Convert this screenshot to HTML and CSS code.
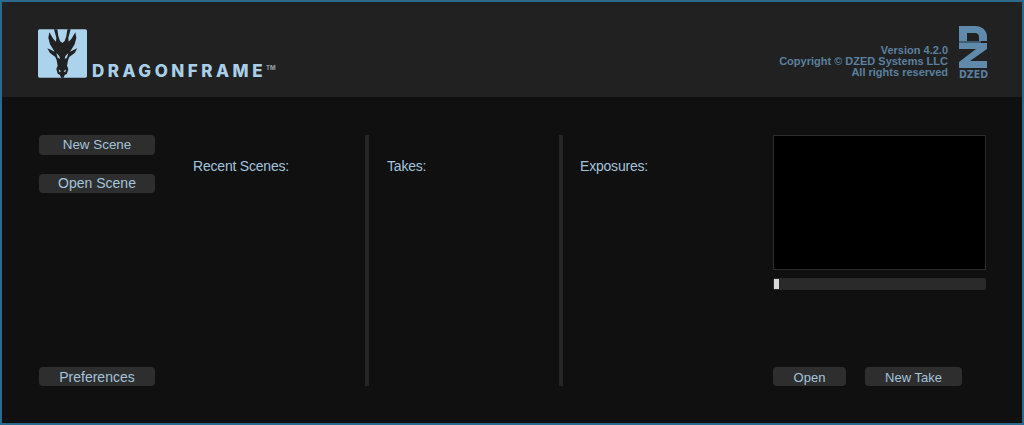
FILE: index.html
```html
<!DOCTYPE html>
<html lang="en">
<head>
<meta charset="utf-8">
<title>Dragonframe</title>
<link rel="stylesheet" href="styles.css">
</head>
<body>
<div class="app">
  <header class="header">
    <div class="brand">
      <svg class="mark" viewBox="10 13 147 145" aria-hidden="true">
        <rect x="10" y="13" width="147" height="145" rx="5" fill="#acd3ec"/>
        <path fill="#212121" d="M68 13 L71 34 L76 48 L83 54 L90 48 L95 34 L98 13 L108 13 L101 38 L102 50 L110 42 L122 22 L125 38 L120 58 L106 80 L118 74 L128 70 L120 84 L104 96 L100 106 L97 122 L101 132 L97 146 L90 150 L87 158 L79 158 L76 150 L69 146 L65 132 L69 122 L66 106 L62 96 L46 84 L38 70 L48 74 L60 80 L46 58 L41 38 L44 22 L56 42 L64 50 L65 38 L58 13 Z"/>
        <path fill="#acd3ec" d="M65 84 L74 93 L76 102 L69 98 Z M101 84 L92 93 L90 102 L97 98 Z M72 133 L79 139 L74 142 Z M94 133 L87 139 L92 142 Z"/>
      </svg>
      <div class="wordmark">DRAGONFRAME<span class="tm">TM</span></div>
    </div>
    <div class="about">
      <div class="about-text">
        <div>Version 4.2.0</div>
        <div>Copyright © DZED Systems LLC</div>
        <div>All rights reserved</div>
      </div>
      <div class="dzed">
        <svg class="dzed-mark" viewBox="0 0 28 42" aria-hidden="true">
          <path fill="#5f8aaa" d="M0 0 H16 C24 0 28 5 28 11 V15 H20 V11 C20 8 18 7 16 7 H8 V15 H0 Z"/>
          <path fill="#5f8aaa" d="M0 17 H28 V23 L11 35 H28 V42 H0 V36 L17 23 H0 Z"/>
          <rect x="0" y="15" width="22" height="2" fill="#3f5c72"/>
        </svg>
        <div class="dzed-name">DZED</div>
      </div>
    </div>
  </header>
  <main class="main">
    <div class="actions">
      <button class="btn btn-new">New Scene</button>
      <button class="btn">Open Scene</button>
      <button class="btn btn-end">Preferences</button>
    </div>
    <section class="col col-recent"><h2 class="col-title">Recent Scenes:</h2></section>
    <div class="divider"></div>
    <section class="col col-takes"><h2 class="col-title">Takes:</h2></section>
    <div class="divider"></div>
    <section class="col col-exposures"><h2 class="col-title">Exposures:</h2></section>
    <aside class="preview">
      <div class="screen"></div>
      <div class="slider"><div class="thumb"></div></div>
      <div class="preview-actions">
        <button class="btn btn-open">Open</button>
        <button class="btn btn-take">New Take</button>
      </div>
    </aside>
  </main>
</div>
</body>
</html>
```
FILE: styles.css
```css
* { box-sizing: border-box; }
html, body { margin: 0; padding: 0; height: 100%; }
body { background: #101010; font-family: "Liberation Sans", Arial, sans-serif; overflow: hidden; }
.app {
  width: 1024px; height: 425px;
  border: 2px solid #2b6a8d;
  background: #101010;
  display: flex; flex-direction: column;
}
.header {
  height: 95px; background: #212121;
  display: flex; justify-content: space-between;
  padding: 24px 35px 0 36px;
}
.brand { display: flex; align-items: flex-end; height: 52px; padding-top: 3px; }
.mark { width: 49px; height: 49px; display: block; margin-top: 3px; }
.wordmark {
  margin-left: 5px; color: #a9cfe8;
  font: 800 17px/16px "Inter", "Liberation Sans", sans-serif;
  letter-spacing: 3.5px;
  white-space: nowrap; position: relative; top: 1px;
}
.tm { font-size: 6px; letter-spacing: 0; color: #8a98a2; vertical-align: 7px; line-height: 0; }
.about { display: flex; align-items: flex-start; }
.about-text {
  margin-top: 19px; text-align: right;
  font-size: 11px; line-height: 11px; font-weight: bold; color: #5a80a0;
}
.dzed { margin-left: 11px; width: 28px; }
.dzed-mark { width: 28px; height: 42px; display: block; }
.dzed-name {
  margin-top: 1px;
  font: bold 10.5px/10px "DejaVu Sans Condensed", "Liberation Sans", sans-serif;
  color: #5a80a0; letter-spacing: 0; white-space: nowrap;
}
.main { flex: 1; display: flex; padding: 38px 35px 37px 37px; }
.actions { width: 116px; display: flex; flex-direction: column; gap: 19px; }
.btn {
  height: 19.5px; width: 116px; padding: 0; border: 0; border-radius: 4px;
  background: #2e2e2e; color: #a3c4dd;
  font: 14px/19px "Liberation Sans", Arial, sans-serif;
  display: block;
}
.btn-new { font-size: 13.4px; }
.btn-end { margin-top: auto; height: 19px; padding-top: 1px; }
.col-title { margin: 0; font: 14px/16px "Liberation Sans", Arial, sans-serif; letter-spacing: -0.2px; color: #a3c4dd; padding-top: 23px; }
.col-recent { width: 210px; padding-left: 38px; }
.col-takes { width: 190px; padding-left: 18px; }
.col-exposures { width: 210px; padding-left: 17px; }
.divider { width: 4px; background: #262626; }
.preview { width: 214px; display: flex; flex-direction: column; }
.screen { height: 135px; background: #000; border: 1px solid #2c2c2c; margin-right: 1px; }
.slider { height: 12px; margin: 8px 1px 0 0; background: #2a2a2a; border-radius: 2px; padding: 1px; }
.thumb { width: 5px; height: 10px; background: #d8d8d8; }
.preview-actions { margin-top: auto; display: flex; gap: 19px; }
.btn-open, .btn-take { height: 19px; padding-top: 1px; font-size: 13px; }
.btn-open { width: 73px; }
.btn-take { width: 97px; }
```
